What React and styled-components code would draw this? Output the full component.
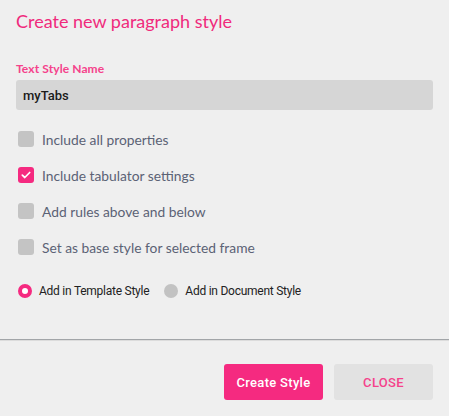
import React from "react";
import styled, { createGlobalStyle } from "styled-components";

const Global = createGlobalStyle`
  html, body { margin: 0; padding: 0; background: #efefef; }
  body { font-family: Lato, "Noto Sans", sans-serif; }
  * { box-sizing: border-box; }
`;

const Dialog = styled.div`
  width: 449px;
  height: 416px;
  background: #efefef;
  display: flex;
  flex-direction: column;
`;

const Body = styled.div`
  padding: 8px 16px 0 16px;
  display: flex;
  flex-direction: column;
  height: 339px;
`;

const Title = styled.h1`
  margin: 0;
  font-family: Lato, sans-serif;
  font-weight: 400;
  font-size: 18px;
  line-height: 26px;
  color: #f02a7c;
`;

const FieldLabel = styled.label`
  margin-top: 28px;
  font-family: Lato, sans-serif;
  font-weight: 700;
  font-size: 12px;
  line-height: 14px;
  color: #f5428b;
  letter-spacing: 0.1px;
`;

const Input = styled.div`
  margin-top: 4px;
  height: 30px;
  background: #d6d6d6;
  border-radius: 3px;
  padding: 0 7px;
  display: flex;
  align-items: center;
  font-family: Roboto, sans-serif;
  font-weight: 500;
  font-size: 13px;
  color: #1b1b1b;
`;

const CheckList = styled.div`
  margin-top: 17px;
  display: flex;
  flex-direction: column;
  gap: 12px;
`;

const CheckRow = styled.div`
  display: flex;
  align-items: center;
  height: 24px;
  padding-left: 2px;
`;

const Box = styled.span`
  width: 16px;
  height: 16px;
  border-radius: 3px;
  background: ${(p) => (p.checked ? "#f52a80" : "#c4c4c4")};
  display: flex;
  align-items: center;
  justify-content: center;
  flex-shrink: 0;
`;

const CheckLabel = styled.span`
  margin-left: 8px;
  font-family: Lato, sans-serif;
  font-size: 13.8px;
  color: #5b6275;
`;

const RadioGroup = styled.div`
  margin-top: 24px;
  height: 16px;
  display: flex;
  align-items: center;
  padding-left: 2px;
`;

const RadioItem = styled.div`
  display: flex;
  align-items: center;
  margin-right: 15px;
`;

const Radio = styled.span`
  width: 14px;
  height: 14px;
  border-radius: 50%;
  flex-shrink: 0;
  background: ${(p) => (p.checked ? "#fff" : "#c2c2c2")};
  border: ${(p) => (p.checked ? "4px solid #f52a80" : "none")};
`;

const RadioLabel = styled.span`
  margin-left: 7px;
  font-family: Roboto, sans-serif;
  font-size: 12px;
  letter-spacing: -0.25px;
  color: #222;
`;

const Divider = styled.div`
  height: 1px;
  background: #a2a5a8;
  border-bottom: 1px solid #dcdcdc;
  box-sizing: content-box;
`;

const Footer = styled.div`
  display: flex;
  justify-content: flex-end;
  gap: 11px;
  padding: 23px 16px 0 0;
`;

const Button = styled.button`
  width: 99px;
  height: 36px;
  border: none;
  border-radius: 3px;
  font-family: Roboto, sans-serif;
  font-weight: 500;
  font-size: 13px;
  background: ${(p) => (p.primary ? "#f52a80" : "#e2e2e2")};
  color: ${(p) => (p.primary ? "#fff" : "#f5428b")};
  letter-spacing: 0.3px;
`;

const Check = () => (
  <svg width="10" height="8" viewBox="0 0 10 8" fill="none">
    <path d="M1.3 4.2 L3.8 6.5 L8.7 1.5" stroke="#fff" strokeWidth="1.7" strokeLinecap="round" strokeLinejoin="round" />
  </svg>
);

const options = [
  { label: "Include all properties", checked: false },
  { label: "Include tabulator settings", checked: true },
  { label: "Add rules above and below", checked: false },
  { label: "Set as base style for selected frame", checked: false },
];

export default function App() {
  return (
    <>
      <Global />
      <Dialog>
        <Body>
          <Title>Create new paragraph style</Title>
          <FieldLabel>Text Style Name</FieldLabel>
          <Input>myTabs</Input>
          <CheckList>
            {options.map((o) => (
              <CheckRow key={o.label}>
                <Box checked={o.checked}>{o.checked && <Check />}</Box>
                <CheckLabel>{o.label}</CheckLabel>
              </CheckRow>
            ))}
          </CheckList>
          <RadioGroup>
            <RadioItem>
              <Radio checked />
              <RadioLabel>Add in Template Style</RadioLabel>
            </RadioItem>
            <RadioItem>
              <Radio />
              <RadioLabel>Add in Document Style</RadioLabel>
            </RadioItem>
          </RadioGroup>
        </Body>
        <Divider />
        <Footer>
          <Button primary>Create Style</Button>
          <Button>CLOSE</Button>
        </Footer>
      </Dialog>
    </>
  );
}
